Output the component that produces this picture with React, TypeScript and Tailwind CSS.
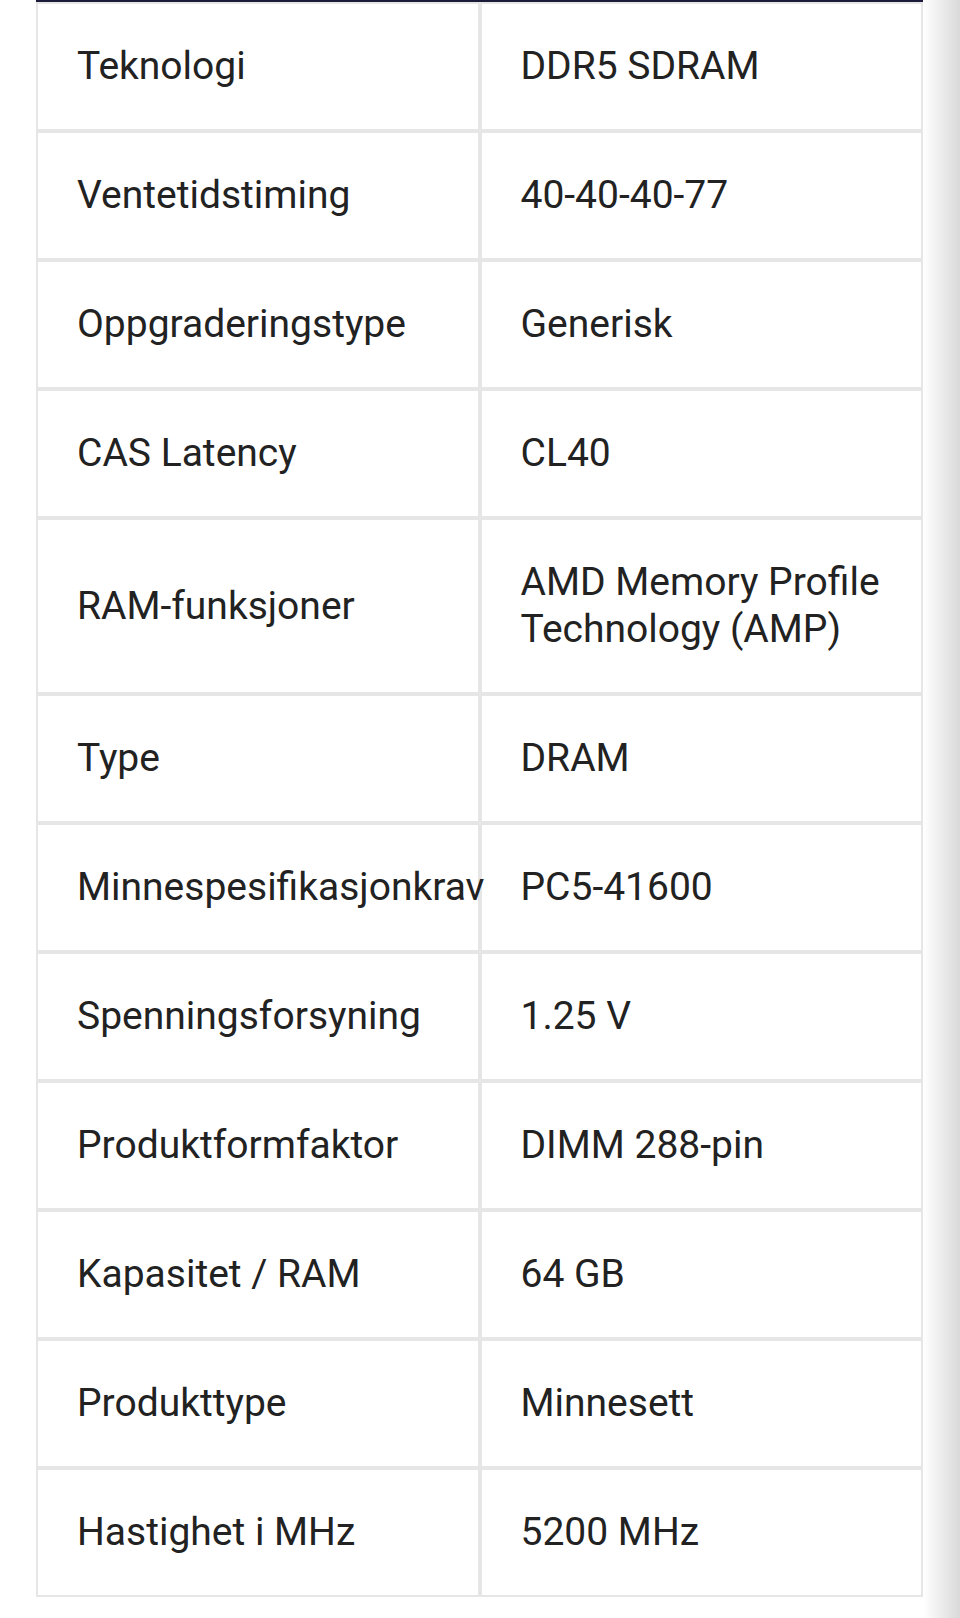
const specs: { label: string; value: string }[] = [
  { label: 'Teknologi', value: 'DDR5 SDRAM' },
  { label: 'Ventetidstiming', value: '40-40-40-77' },
  { label: 'Oppgraderingstype', value: 'Generisk' },
  { label: 'CAS Latency', value: 'CL40' },
  { label: 'RAM-funksjoner', value: 'AMD Memory Profile Technology (AMP)' },
  { label: 'Type', value: 'DRAM' },
  { label: 'Minnespesifikasjonkrav', value: 'PC5-41600' },
  { label: 'Spenningsforsyning', value: '1.25 V' },
  { label: 'Produktformfaktor', value: 'DIMM 288-pin' },
  { label: 'Kapasitet / RAM', value: '64 GB' },
  { label: 'Produkttype', value: 'Minnesett' },
  { label: 'Hastighet i MHz', value: '5200 MHz' },
];

export default function App() {
  return (
    <div
      className="flex w-[960px] h-[1618px] bg-white text-[#222222]"
      style={{ fontFamily: 'Roboto, "Liberation Sans", sans-serif' }}
    >
      <div className="w-[923px] pl-[36px]">
        {/* spec table */}
        <div className="border-t-2 border-[#1d1b3b]">
          <div className="grid grid-cols-2 gap-[4px] bg-[#e6e6e6] p-[2px]">
            {specs.map((s) => (
              <div key={s.label} className="contents">
                <div className="bg-white flex items-center pl-[39px] py-[39px] text-[39px] leading-[47px] whitespace-nowrap">
                  <span className="relative">{s.label}</span>
                </div>
                <div className="bg-white flex items-center pl-[39px] pr-[30px] py-[39px] text-[39px] leading-[47px]">
                  <span>{s.value}</span>
                </div>
              </div>
            ))}
          </div>
        </div>
      </div>
      <div className="flex-1 bg-gradient-to-r from-white via-[#ececec] to-[#d9d9d9]" />
    </div>
  );
}
